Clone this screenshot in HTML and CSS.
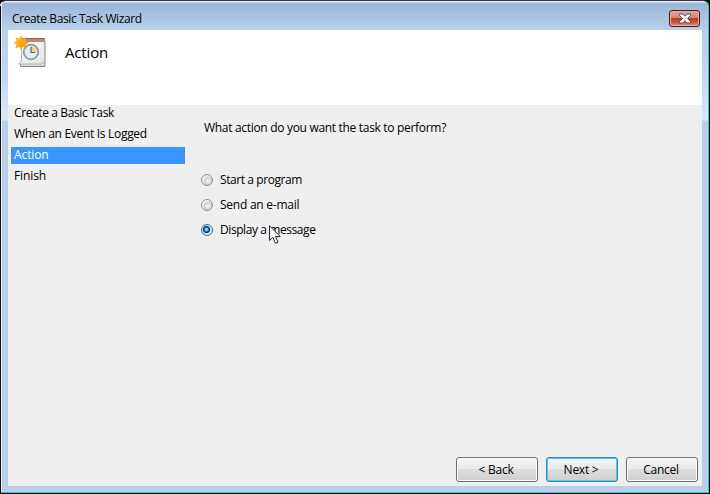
FILE: index.html
```
<!DOCTYPE html>
<html lang="en">
<head>
<meta charset="utf-8">
<title>Create Basic Task Wizard</title>
<link rel="stylesheet" href="styles.css">
</head>
<body>
<div class="window">
  <div class="titlebar">
    <span class="title">Create Basic Task Wizard</span>
    <button class="close" aria-label="Close">
      <svg width="14" height="11" viewBox="0 0 14 11"><path d="M1.500 1h3.500L7 3.200 9 1h3.500v1.500L9.500 5.500l3 3V10H9L7 7.800 5 10H1.500V8.500l3-3-3-3z" fill="#f7f7fa" stroke="#535666"/></svg>
    </button>
  </div>
  <div class="client">
    <header class="header">
      <svg class="task-icon" width="34" height="34" viewBox="0 0 34 34">
        <defs>
          <linearGradient id="paper" x2="1" y2="1"><stop stop-color="#fff"/><stop offset="1" stop-color="#e2e2e2"/></linearGradient>
          <linearGradient id="sun" x2="1" y2="1"><stop stop-color="#ffc928"/><stop offset="1" stop-color="#f58b00"/></linearGradient>
        </defs>
        <path d="M6.500 26v4.500h24.500V5" fill="#d6d6d6" stroke="#8b8b8b"/>
        <path d="M7.500 3.500h23v21.500l-3 3H4.500l3-3z" fill="url(#paper)" stroke="#b5b5b5"/>
        <path d="M7 2h24v4H7z" fill="#b98a75"/><path d="M7 2.500h24" stroke="#94634f"/>
        <circle cx="17" cy="16" r="7.300" fill="#e3ecf2" stroke="#929ba2" stroke-width="1.800"/>
        <path d="M17 16v-6a6 6 0 0 1 6 6z" fill="#f4d48c"/>
        <path d="M17 11v5.500h4" fill="none" stroke="#4e687d" stroke-width="1.200"/>
        <path d="M7 0l1.500 3.200L12 1.500l-.8 3.700 3.300 1.500-3.300 1.600.9 3.700-3.500-1.500L7 13.500l-1.600-3L2 12l.8-3.700L0 6.700l2.900-1.400L2 1.500l3.400 1.700z" fill="url(#sun)" stroke="#eda21a" stroke-width=".5"/>
      </svg>
      <h1 class="heading">Action</h1>
    </header>
    <div class="body">
      <nav class="steps">
        <div class="step s1">Create a Basic Task</div>
        <div class="step s2">When an Event Is Logged</div>
        <div class="step active">Action</div>
        <div class="step s4">Finish</div>
      </nav>
      <main class="main">
        <p class="question">What action do you want the task to perform?</p>
        <div class="option"><i class="radio"></i><span class="o1">Start a program</span></div>
        <div class="option"><i class="radio"></i><span class="o2">Send an e-mail</span></div>
        <div class="option"><i class="radio checked"></i><span class="o3">Display a message</span></div>
      </main>
    </div>
    <footer class="footer">
      <button class="btn back">&lt; Back</button>
      <button class="btn next">Next &gt;</button>
      <button class="btn cancel">Cancel</button>
    </footer>
  </div>
  <svg class="cursor" width="13" height="20" viewBox="0 0 13 20"><path d="M.5.800v14.700l3.300-3.200 2.700 6 2.500-1.100-2.600-5.700h4.900z" fill="#fff" stroke="#25273a"/></svg>
</div>
</body>
</html>
```
FILE: styles.css
```
* { box-sizing: border-box; }
body {
  margin: 0;
  background: #000;
  font: 12px/16px "Open Sans", "Noto Sans", sans-serif;
  color: #000;
  overflow: hidden;
}
.window {
  position: relative;
  width: 709px;
  height: 493px;
  padding: 0 6px 6px 7px;
  border: 1px solid #27cbe2;
  border-left-color: #f2f7fc;
  border-top: 1px solid #33343c;
  border-radius: 6px 6px 0 0;
  background: linear-gradient(#e4effa 0 1px, #9ab5d5 2px, #b9d0ea 29px, #c4d9f0 80px, #dce8f6 119px, #b9cfe9 120px);
  box-shadow: inset 1px 0 #e4eefa;
}
.window::before {
  content: "";
  position: absolute;
  left: -1px;
  top: 5px;
  bottom: -1px;
  width: 1px;
  background: #101014;
}
.titlebar {
  height: 29px;
  display: flex;
  justify-content: space-between;
  padding: 0 2px 0 4px;
}
.title { padding-top: 10px; letter-spacing: -.39px; }
.close {
  margin-top: 9px;
  width: 31px;
  height: 17px;
  padding: 0;
  display: flex;
  align-items: center;
  justify-content: center;
  border: 1px solid #4e1720;
  border-radius: 3px;
  background: linear-gradient(#e6a394, #d38476 47%, #b83b26 50%, #c95640 75%, #dc9685);
  box-shadow: inset 0 0 0 1px #e7aea3;
}
.client {
  width: 694px;
  height: 456px;
  background: #efefef;
  display: flex;
  flex-direction: column;
}
.header {
  height: 75px;
  background: #fff;
  display: flex;
  align-items: flex-start;
  padding: 6px 0 0 6px;
}
.heading {
  margin: 5px 0 0 17px;
  font-size: 15px;
  line-height: 22px;
  font-weight: 400;
  letter-spacing: -.15px;
}
.body { flex: 1; display: flex; }
.steps { width: 180px; padding-left: 3px; }
.step { height: 17px; margin-bottom: 4px; padding-left: 3px; width: 174px; letter-spacing: -.1px; }
.s1 { letter-spacing: -.38px; }
.s2 { letter-spacing: -.3px; }
.active { background: #3797ff; color: #fff; }
.main { padding: 15px 0 0 13px; }
.question { margin: 0 0 31px 3px; letter-spacing: -.31px; }
.option { height: 25px; display: flex; align-items: center; letter-spacing: -.25px; }
.o1, .o3 { letter-spacing: -.42px; }
.radio {
  width: 12px;
  height: 12px;
  margin-right: 7px;
  border: 1px solid #8e8f8f;
  border-radius: 50%;
  background: radial-gradient(circle at 6px 6px, #eeeeee 0 1px, #c6c9cd 4px, #f4f4f4 4.800px);
}
.radio.checked {
  border-color: #3f7596;
  background: radial-gradient(circle at 4.500px 4.500px, #79dcfb 0 1px, #1683b9 2px, #0b3552 3.200px, #c9e7f5 4px);
}
.footer { height: 29px; display: flex; justify-content: flex-end; gap: 8px; padding-right: 4px; }
.btn {
  height: 25px;
  padding: 0;
  border: 1px solid #707070;
  border-radius: 3px;
  background: linear-gradient(#f2f2f2, #ebebeb 49%, #dddddd 50%, #cfcfcf);
  box-shadow: inset 0 0 0 1px #fafafa;
  font: inherit;
  color: #000;
  letter-spacing: -.25px;
}
.back { width: 82px; padding-right: 2px; }
.next { width: 72px; padding-right: 2px; border-color: #3c7fb1; box-shadow: inset 0 0 0 1px #48d0f7; }
.cancel { width: 72px; padding-right: 2px; }
.cursor { position: absolute; left: 268px; top: 224px; }
```
